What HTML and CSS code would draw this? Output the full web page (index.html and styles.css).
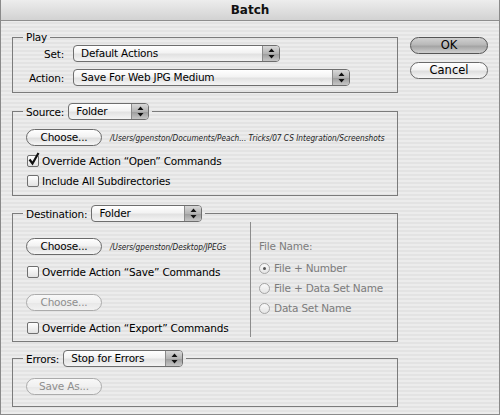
FILE: index.html
```html
<!DOCTYPE html>
<html>
<head>
<meta charset="utf-8">
<link rel="stylesheet" href="styles.css">
</head>
<body>
<div class="window">
  <div class="titlebar">Batch</div>
  <div class="content">
    <div class="main">
      <fieldset class="group play">
        <legend class="legend-text">Play</legend>
        <div class="play-grid">
          <span class="label">Set:</span>
          <div class="select w-set"><span class="sel-text">Default Actions</span><span class="sel-arrow"><svg width="7" height="11" viewBox="0 0 7 11"><path d="M3.5 0.5 L6.5 4 L0.5 4 Z M3.5 10.5 L6.5 7 L0.5 7 Z" fill="#111"/></svg></span></div>
          <span class="label">Action:</span>
          <div class="select w-action"><span class="sel-text">Save For Web JPG Medium</span><span class="sel-arrow"><svg width="7" height="11" viewBox="0 0 7 11"><path d="M3.5 0.5 L6.5 4 L0.5 4 Z M3.5 10.5 L6.5 7 L0.5 7 Z" fill="#111"/></svg></span></div>
        </div>
      </fieldset>

      <fieldset class="group source">
        <legend class="legend-ctl"><span class="label">Source:</span><div class="select w-source"><span class="sel-text">Folder</span><span class="sel-arrow"><svg width="7" height="11" viewBox="0 0 7 11"><path d="M3.5 0.5 L6.5 4 L0.5 4 Z M3.5 10.5 L6.5 7 L0.5 7 Z" fill="#111"/></svg></span></div></legend>
        <div class="row btn-row">
          <div class="btn">Choose...</div>
          <span class="path path-source">/Users/gpenston/Documents/Peach... Tricks/07 CS Integration/Screenshots</span>
        </div>
        <div class="check-row first"><span class="checkbox checked"><svg width="13" height="14" viewBox="0 0 13 14"><path d="M2.5 7.5 L5.5 11.5 L11.5 1" fill="none" stroke="#111" stroke-width="2.2"/></svg></span><span>Override Action “Open” Commands</span></div>
        <div class="check-row second"><span class="checkbox"></span><span>Include All Subdirectories</span></div>
      </fieldset>

      <fieldset class="group dest">
        <legend class="legend-ctl"><span class="label">Destination:</span><div class="select w-dest"><span class="sel-text">Folder</span><span class="sel-arrow"><svg width="7" height="11" viewBox="0 0 7 11"><path d="M3.5 0.5 L6.5 4 L0.5 4 Z M3.5 10.5 L6.5 7 L0.5 7 Z" fill="#111"/></svg></span></div></legend>
        <div class="dest-body">
          <div class="dest-left">
            <div class="row btn-row">
              <div class="btn">Choose...</div>
              <span class="path path-dest">/Users/gpenston/Desktop/JPEGs</span>
            </div>
            <div class="check-row save"><span class="checkbox"></span><span>Override Action “Save” Commands</span></div>
            <div class="row btn-row disabled-row">
              <div class="btn disabled">Choose...</div>
            </div>
            <div class="check-row export"><span class="checkbox"></span><span>Override Action “Export” Commands</span></div>
          </div>
          <div class="divider"></div>
          <div class="dest-right">
            <div class="fn-label">File Name:</div>
            <div class="radio-row"><span class="radio on"></span><span>File + Number</span></div>
            <div class="radio-row"><span class="radio"></span><span>File + Data Set Name</span></div>
            <div class="radio-row"><span class="radio"></span><span>Data Set Name</span></div>
          </div>
        </div>
      </fieldset>

      <fieldset class="group errors">
        <legend class="legend-ctl"><span class="label">Errors:</span><div class="select w-errors"><span class="sel-text">Stop for Errors</span><span class="sel-arrow"><svg width="7" height="11" viewBox="0 0 7 11"><path d="M3.5 0.5 L6.5 4 L0.5 4 Z M3.5 10.5 L6.5 7 L0.5 7 Z" fill="#111"/></svg></span></div></legend>
        <div class="row errors-row">
          <div class="btn disabled">Save As...</div>
        </div>
      </fieldset>
    </div>
    <div class="side">
      <div class="btn side-btn default">OK</div>
      <div class="btn side-btn">Cancel</div>
    </div>
  </div>
</div>
</body>
</html>
```

FILE: styles.css
```css
html, body {
  margin: 0;
  padding: 0;
  background: #ffffff;
}

.window {
  width: 500px;
  height: 415px;
  box-sizing: border-box;
  border: 1px solid #8a8a8a;
  border-top: none;
  background: repeating-linear-gradient(to bottom, #ececec 0px, #ececec 2px, #e3e3e3 2px, #e3e3e3 4px);
  font-family: "DejaVu Sans", "Liberation Sans", sans-serif;
  font-size: 10.5px;
  letter-spacing: -0.2px;
  color: #000;
  display: flex;
  flex-direction: column;
}

.titlebar {
  height: 20px;
  border-bottom: 1px solid #8e8e8e;
  background: linear-gradient(to bottom, #ededed, #d2d2d2);
  text-align: center;
  line-height: 20px;
  font-weight: bold;
  font-size: 12px;
  letter-spacing: 0;
  color: #111;
}

.content {
  display: flex;
  padding: 9px 0 0 11px;
}

.main {
  width: 386px;
  display: flex;
  flex-direction: column;
}

.group {
  margin: 0;
  padding: 0 13px;
  border: 1px solid #7b7b7b;
  min-width: 0;
}

.legend-text {
  padding: 0 3px;
  margin-left: -3px;
  line-height: 14px;
  height: 14px;
}

.legend-ctl {
  padding: 0 3px;
  margin-left: -3px;
  display: flex;
  align-items: center;
  gap: 4px;
  height: 17px;
}

/* Play */
.play {
  padding-top: 1px;
  padding-bottom: 6px;
}

.play-grid {
  display: grid;
  grid-template-columns: 38px auto;
  grid-auto-rows: 17px;
  row-gap: 7px;
  column-gap: 9px;
  align-items: center;
}

.play-grid .label {
  text-align: right;
}

/* select */
.select {
  height: 17px;
  box-sizing: border-box;
  border: 1px solid #6e6e6e;
  border-radius: 4px;
  background: linear-gradient(to bottom, #ffffff 0%, #f3f3f3 45%, #e2e2e2 55%, #f4f4f4 100%);
  display: flex;
  align-items: center;
  overflow: hidden;
}

.sel-text {
  flex: 1;
  padding-left: 7px;
  line-height: 15px;
  white-space: nowrap;
}

.sel-arrow {
  width: 16px;
  height: 15px;
  border-left: 1px solid #8a8a8a;
  background: linear-gradient(to bottom, #d8d8d8 0%, #b4b4b4 50%, #9e9e9e 55%, #c6c6c6 100%);
  display: flex;
  align-items: center;
  justify-content: center;
}

.w-set { width: 207px; }
.w-action { width: 277px; }
.w-source { width: 81px; }
.w-dest { width: 111px; }
.w-errors { width: 120px; }

/* buttons */
.btn {
  height: 17px;
  width: 76px;
  box-sizing: border-box;
  border: 1px solid #6a6a6a;
  border-radius: 9px;
  background: linear-gradient(to bottom, #ffffff 0%, #f2f2f2 45%, #dedede 55%, #f6f6f6 100%);
  text-align: center;
  line-height: 15px;
  flex: none;
}

.btn.disabled {
  border-color: #ababab;
  color: #8e8e8e;
  background: linear-gradient(to bottom, #f8f8f8 0%, #f0f0f0 50%, #e8e8e8 55%, #f2f2f2 100%);
}

.row {
  display: flex;
  align-items: center;
}

.btn-row {
  gap: 8px;
}

.path {
  font-size: 8.2px;
  font-style: italic;
  font-family: "DejaVu Sans Condensed", "DejaVu Sans", sans-serif;
  letter-spacing: 0;
  color: #222;
  white-space: nowrap;
}

.source {
  margin-top: 10px;
  padding-bottom: 6px;
}

.source .btn-row {
  margin-top: 9px;
}

.check-row {
  display: flex;
  align-items: center;
  gap: 3px;
  height: 16px;
  padding-left: 1px;
  white-space: nowrap;
}

.source .check-row.first { margin-top: 7px; }
.source .check-row.second { margin-top: 4px; }

.checkbox {
  position: relative;
  width: 12px;
  height: 12px;
  box-sizing: border-box;
  border: 1px solid #6f6f6f;
  border-radius: 2px;
  background: linear-gradient(to bottom, #ffffff, #e2e2e2);
  flex: none;
}

.checkbox svg {
  position: absolute;
  left: -1px;
  top: -4px;
}

/* destination */
.dest {
  margin-top: 9px;
  padding-bottom: 4px;
}

.dest-body {
  display: flex;
  height: 115px;
}

.dest-left {
  width: 224px;
  padding-top: 16px;
  display: flex;
  flex-direction: column;
}

.dest-left .check-row.save { margin-top: 9px; }
.dest-left .disabled-row { margin-top: 14px; }
.dest-left .check-row.export { margin-top: 9px; }

.divider {
  width: 1px;
  background: #8c8c8c;
}

.dest-right {
  padding-left: 8px;
  padding-top: 17px;
  color: #7c7c7c;
  display: flex;
  flex-direction: column;
  white-space: nowrap;
}

.fn-label {
  line-height: 14px;
  margin-bottom: 7px;
}

.radio-row {
  display: flex;
  align-items: center;
  gap: 4px;
  height: 16px;
  margin-bottom: 4px;
}

.radio {
  width: 11px;
  height: 11px;
  box-sizing: border-box;
  border: 1px solid #a4a4a4;
  border-radius: 50%;
  background: linear-gradient(to bottom, #fafafa, #e4e4e4);
  display: flex;
  align-items: center;
  justify-content: center;
  flex: none;
}

.radio.on::after {
  content: "";
  width: 3px;
  height: 3px;
  border-radius: 50%;
  background: #555;
}

/* errors */
.errors {
  margin-top: 8px;
  padding-bottom: 11px;
}

.errors-row {
  margin-top: 11px;
}

/* side */
.side {
  margin-left: 12px;
  margin-top: 7px;
  display: flex;
  flex-direction: column;
  gap: 8px;
}

.side-btn {
  width: 78px;
  height: 17px;
  font-size: 11.5px;
  letter-spacing: 0;
}

.side-btn.default {
  border-color: #555;
  background: linear-gradient(to bottom, #d0d0d0 0%, #b8b8b8 45%, #a4a4a4 55%, #cfcfcf 100%);
}
```
